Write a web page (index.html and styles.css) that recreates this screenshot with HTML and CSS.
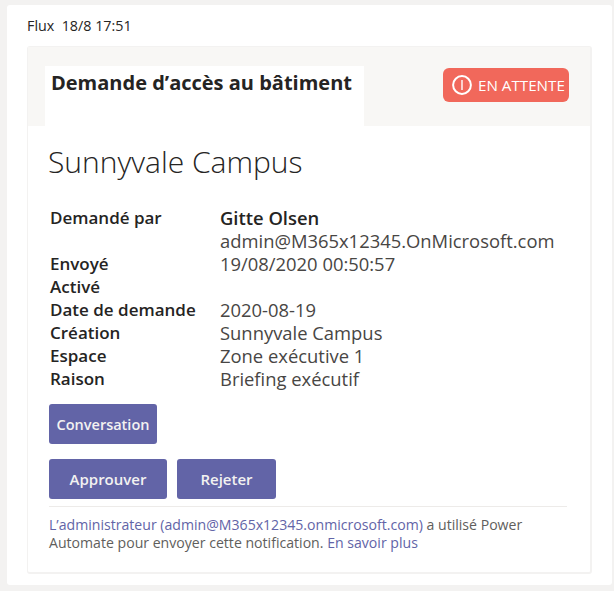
FILE: index.html
```html
<!DOCTYPE html>
<html lang="fr">
<head>
    <meta charset="UTF-8">
    <meta name="viewport" content="width=device-width, initial-scale=1.0">
    <title>Demande d'accès au bâtiment</title>
    <link rel="stylesheet" href="styles.css">
</head>
<body>
    <div class="panel">
        <div class="meta">Flux&nbsp; 18/8 17:51</div>
        <div class="card">
            <div class="card-head">
                <div class="tab"><strong>Demande d’accès au bâtiment</strong></div>
                <div class="badge">
                    <svg class="badge-icon" width="20" height="20" viewBox="0 0 20 20">
                        <circle cx="10" cy="10" r="8.9" fill="none" stroke="#fff" stroke-width="2"/>
                        <path d="M10 5v10" stroke="#fff" stroke-width="1.4" fill="none"/>
                    </svg>
                    <span>EN ATTENTE</span>
                </div>
            </div>
            <div class="card-body">
                <h1>Sunnyvale Campus</h1>
                <div class="facts">
                    <div class="fact-label">Demandé par</div>
                    <div class="fact-value"><strong>Gitte Olsen</strong><br>admin@M365x12345.OnMicrosoft.com</div>
                    <div class="fact-label">Envoyé</div>
                    <div class="fact-value">19/08/2020 00:50:57</div>
                    <div class="fact-label">Activé</div>
                    <div class="fact-value"></div>
                    <div class="fact-label">Date de demande</div>
                    <div class="fact-value">2020-08-19</div>
                    <div class="fact-label">Création</div>
                    <div class="fact-value">Sunnyvale Campus</div>
                    <div class="fact-label">Espace</div>
                    <div class="fact-value">Zone exécutive 1</div>
                    <div class="fact-label">Raison</div>
                    <div class="fact-value">Briefing exécutif</div>
                </div>
                <div class="actions">
                    <button class="btn btn-small">Conversation</button>
                </div>
                <div class="actions">
                    <button class="btn btn-approve">Approuver</button>
                    <button class="btn btn-reject">Rejeter</button>
                </div>
                <div class="footer">
                    <div><a href="#">L’administrateur (admin@M365x12345.onmicrosoft.com)</a> a utilisé Power</div>
                    <div>Automate pour envoyer cette notification. <a href="#">En savoir plus</a></div>
                </div>
            </div>
        </div>
    </div>
</body>
</html>
```

FILE: styles.css
```css
html, body { height: 100%; }
body { font-family: "Open Sans", "Noto Sans", sans-serif; background: #f3f2f1; margin: 0; padding: 5px 2px 6px 7px; box-sizing: border-box; color: #252423; overflow: hidden; }
.panel { background: white; border-radius: 3px; padding: 13px 20px 10px 20px; height: 100%; box-sizing: border-box; }
.meta { font-size: 14.3px; line-height: 16px; height: 28px; color: #252423; }
.card { border: 2px solid #f3f2f1; border-top-width: 1px; border-left-width: 1px; border-radius: 3px; height: 528px; box-sizing: border-box; }
.card-head { background: #f8f7f5; height: 79px; padding: 19px 21px 0 17px; display: flex; justify-content: space-between; box-sizing: border-box; }
.tab { background: white; width: 319px; height: 60px; padding: 3px 0 0 6px; box-sizing: border-box; font-size: 20px; line-height: 28px; color: #252423; }
.badge { background: #f1685b; color: white; border-radius: 6px; width: 126px; height: 34px; margin-top: 2px; display: flex; align-items: center; gap: 6px; padding-left: 9px; box-sizing: border-box; font-size: 15.2px; white-space: nowrap; }
.badge-icon { flex: none; }
.card-body { padding: 18px 23px 0 21px; }
h1 { font-size: 30px; font-weight: 300; line-height: 36px; margin: 0 0 26px -1px; color: #252423; }
.facts { display: grid; grid-template-columns: 170px 1fr; grid-auto-rows: minmax(23px, auto); font-size: 18.4px; line-height: 23px; padding-left: 1px; }
.fact-label { font-size: 17px; font-weight: 600; color: #252423; }
.fact-value { color: #484644; }
.fact-value strong { color: #252423; font-weight: 600; }
.actions { display: flex; gap: 10px; margin-top: 15px; }
.facts + .actions { margin-top: 14px; }
.btn { font-family: inherit; font-size: 15px; font-weight: 600; height: 40px; background: #6264a7; color: #f3f2f1; border: none; border-radius: 3px; padding: 0; }
.btn-small { width: 108px; font-size: 14.5px; }
.btn-approve { width: 118px; }
.btn-reject { width: 99px; }
.footer { border-top: 1px solid #edebe9; margin-top: 7px; padding-top: 9px; font-size: 14.1px; line-height: 18px; color: #605e5c; white-space: nowrap; }
.footer a { color: #6264a7; text-decoration: none; }
```
